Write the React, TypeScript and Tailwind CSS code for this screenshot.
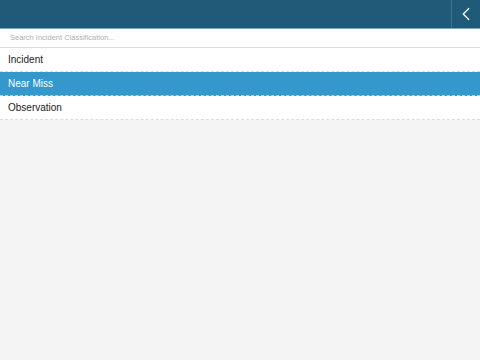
import { ChevronLeft } from "lucide-react";

const ITEMS = ["Incident", "Near Miss", "Observation"];

export default function App() {
  const selected = "Near Miss";
  return (
    <div className="w-[480px] h-[360px] bg-[#f4f4f4] flex flex-col font-['Helvetica','Liberation_Sans',Arial,sans-serif]">
      {/* Header */}
      <div className="h-[29px] flex justify-end bg-[#1f5b79] border-b border-[#7ea8bf]">
        <button className="w-[29px] flex items-center justify-center border-l border-[#3f7593] text-white">
          <ChevronLeft size={22} strokeWidth={1.4} />
        </button>
      </div>

      {/* Search */}
      <div className="h-[19px] bg-white border-b border-[#dcdcdc] flex items-center px-[10px]">
        <input
          placeholder="Search Incident Classification..."
          className="w-full text-[7.5px] outline-none placeholder:text-[#b0b0b0] bg-transparent"
        />
      </div>

      {/* List */}
      <div className="flex flex-col">
        {ITEMS.map(item => (
          <div
            key={item}
            className={
              "h-[24px] flex items-center px-[8px] text-[10px] border-b border-dashed " +
              (item === selected
                ? "bg-[#3498cc] text-white border-[#a9d3ea]"
                : "bg-white text-[#222] border-[#dcdcdc]")
            }
          >
            {item}
          </div>
        ))}
      </div>
    </div>
  );
}
